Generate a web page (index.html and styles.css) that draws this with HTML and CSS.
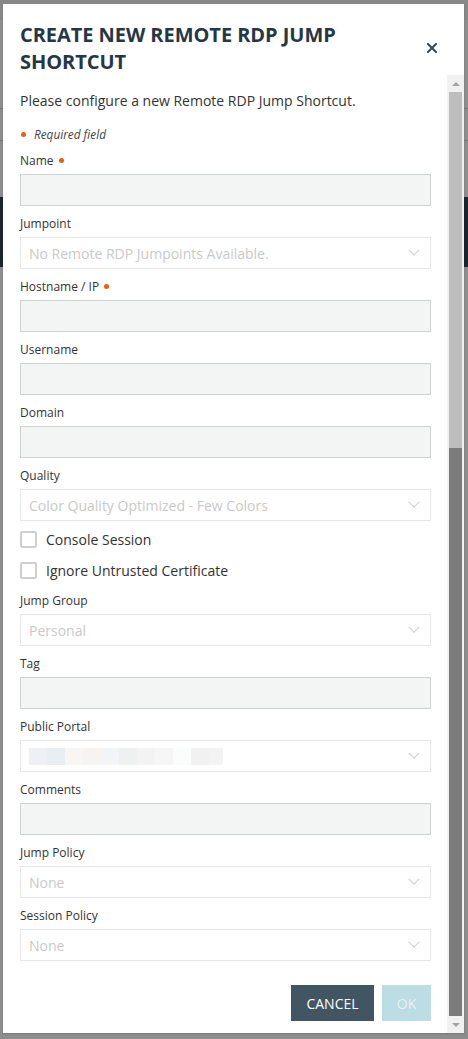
FILE: index.html
```html
<!DOCTYPE html>
<html lang="en">
<head>
<meta charset="utf-8">
<title>Create New Remote RDP Jump Shortcut</title>
<link rel="stylesheet" href="styles.css">
</head>
<body>
<div class="modal">
  <div class="modal-header">
    <h1 class="title">CREATE NEW REMOTE RDP JUMP SHORTCUT</h1>
    <button class="close" aria-label="Close">
      <svg width="10" height="10" viewBox="0 0 10 10"><path d="M1 1 L9 9 M9 1 L1 9" stroke="#3a4550" stroke-width="2" stroke-linecap="square"/></svg>
    </button>
  </div>
  <div class="modal-main">
    <div class="content">
      <p class="intro">Please configure a new Remote RDP Jump Shortcut.</p>
      <p class="required"><span class="dot"></span><em>Required field</em></p>

      <div class="field">
        <label class="label">Name <span class="dot"></span></label>
        <div class="input"></div>
      </div>
      <div class="field">
        <label class="label">Jumpoint</label>
        <div class="select"><span class="placeholder">No Remote RDP Jumpoints Available.</span><span class="chev"></span></div>
      </div>
      <div class="field">
        <label class="label">Hostname / IP <span class="dot"></span></label>
        <div class="input"></div>
      </div>
      <div class="field">
        <label class="label">Username</label>
        <div class="input"></div>
      </div>
      <div class="field">
        <label class="label">Domain</label>
        <div class="input"></div>
      </div>
      <div class="field">
        <label class="label">Quality</label>
        <div class="select"><span class="placeholder">Color Quality Optimized - Few Colors</span><span class="chev"></span></div>
      </div>

      <div class="check"><span class="box"></span><span>Console Session</span></div>
      <div class="check last"><span class="box"></span><span>Ignore Untrusted Certificate</span></div>

      <div class="field">
        <label class="label">Jump Group</label>
        <div class="select"><span class="placeholder">Personal</span><span class="chev"></span></div>
      </div>
      <div class="field">
        <label class="label">Tag</label>
        <div class="input"></div>
      </div>
      <div class="field">
        <label class="label">Public Portal</label>
        <div class="select">
          <span class="blur">
            <i class="b1"></i><i class="b2"></i><i class="b3"></i><i class="b4"></i><i class="b5"></i><i class="b6"></i><i class="b7"></i><i class="b8"></i><i class="b9"></i><i class="b10"></i><i class="b11"></i>
          </span>
          <span class="chev"></span>
        </div>
      </div>
      <div class="field">
        <label class="label">Comments</label>
        <div class="input"></div>
      </div>
      <div class="field">
        <label class="label">Jump Policy</label>
        <div class="select"><span class="placeholder">None</span><span class="chev"></span></div>
      </div>
      <div class="field">
        <label class="label">Session Policy</label>
        <div class="select"><span class="placeholder">None</span><span class="chev"></span></div>
      </div>

      <div class="actions">
        <button class="btn cancel">CANCEL</button>
        <button class="btn ok">OK</button>
      </div>
    </div>
    <div class="scrollbar">
      <div class="arrow up"></div>
      <div class="thumb"></div>
      <div class="track-dark"></div>
      <div class="arrow down"></div>
    </div>
  </div>
</div>
</body>
</html>
```

FILE: styles.css
```css
* { box-sizing: border-box; }

html, body { height: 100%; }

body {
  margin: 0;
  padding: 4px 4px 0 3px;
  font-family: "Open Sans", "Noto Sans", sans-serif;
  color: #2e2e2e;
  background: linear-gradient(to bottom,
    #888888 0, #888888 20px,
    #8e8e8e 20px, #8e8e8e 108px,
    #767676 108px, #767676 109px,
    #8e8e8e 109px, #8e8e8e 140px,
    #767676 140px, #767676 141px,
    #8e8e8e 141px, #8e8e8e 197px,
    #1c252e 197px, #1c252e 267px,
    #8e8e8e 267px, #8e8e8e 100%);
}

.modal {
  width: 461px;
  height: 1029px;
  background: #ffffff;
  display: flex;
  flex-direction: column;
  box-shadow: 0 1px 2px rgba(0,0,0,0.15);
}

.modal-header {
  display: flex;
  align-items: flex-start;
  justify-content: space-between;
  padding: 17px 0 0 17px;
  height: 71px;
}

.title {
  margin: 0;
  font-size: 20px;
  line-height: 27px;
  font-weight: 700;
  color: #253746;
  width: 360px;
  letter-spacing: -0.05px;
}

.close {
  border: 0;
  background: none;
  padding: 0;
  margin: 22px 27px 0 0;
  width: 10px;
  height: 10px;
  display: flex;
}

.modal-main {
  flex: 1;
  display: flex;
  min-height: 0;
}

.content {
  flex: 1;
  padding: 16px 16px 0 17px;
}

.intro {
  margin: 0;
  font-size: 14px;
  line-height: 20px;
  color: #333;
}

.required {
  margin: 15px 0 10px;
  display: flex;
  align-items: center;
  gap: 8px;
  font-size: 11.8px;
  line-height: 16px;
  color: #444;
  padding-left: 1px;
}

.dot {
  display: inline-block;
  width: 5px;
  height: 5px;
  border-radius: 50%;
  background: #f35b0a;
  vertical-align: 2px;
  margin-left: 2px;
}

.required .dot { margin-left: 0; }

.field {
  margin-bottom: 9px;
}

.label {
  display: block;
  font-size: 12px;
  line-height: 18px;
  color: #333;
  margin-bottom: 4px;
}

.input {
  height: 32px;
  width: 411px;
  border: 1px solid #cfd2d2;
  background: #f3f4f4;
}

.select {
  height: 32px;
  width: 411px;
  border: 1px solid #e6e6e6;
  background: #fff;
  display: flex;
  align-items: center;
  justify-content: space-between;
  padding: 0 12px 0 8px;
}

.placeholder {
  font-size: 14px;
  color: #c9c9c9;
}

.chev {
  width: 8px;
  height: 8px;
  border-right: 1px solid #cfcfcf;
  border-bottom: 1px solid #cfcfcf;
  transform: rotate(45deg) translate(-2px, -2px);
}

.blur {
  display: flex;
  height: 17px;
}

.blur i {
  display: block;
  height: 17px;
  width: 18px;
}
.blur .b1 { background: #eef1f4; }
.blur .b2 { background: #e9eef2; }
.blur .b3 { background: #f7f6f5; }
.blur .b4 { background: #f6f3f1; }
.blur .b5 { background: #f3f4f5; }
.blur .b6 { background: #eff0f0; }
.blur .b7 { background: #f3f3f3; }
.blur .b8 { background: #f6f6f6; }
.blur .b9 { background: #fbfcfc; }
.blur .b10 { background: #f1f1f1; }
.blur .b11 { background: #f3f3f3; width: 14px; }

.check {
  display: flex;
  align-items: center;
  gap: 9px;
  height: 19px;
  margin-bottom: 12px;
  font-size: 14px;
  color: #333;
}

.box {
  width: 17px;
  height: 17px;
  border: 2px solid #cfcfcf;
  border-radius: 2px;
  background: #fff;
}

.actions {
  display: flex;
  justify-content: flex-end;
  gap: 8px;
  margin-top: 24px;
}

.btn {
  height: 36px;
  border: 0;
  font-family: inherit;
  font-size: 14px;
  color: #fff;
  padding: 0;
}

.cancel {
  width: 83px;
  background: #415563;
}

.ok {
  width: 49px;
  background: #bcdde4;
  color: #e6f2f5;
}

.scrollbar {
  width: 17px;
  background: #f1f1f1;
  display: flex;
  flex-direction: column;
  align-items: center;
}

.arrow {
  width: 17px;
  height: 17px;
  display: flex;
  align-items: center;
  justify-content: center;
}

.arrow::before {
  content: "";
  width: 0;
  height: 0;
  border-left: 4px solid transparent;
  border-right: 4px solid transparent;
}

.arrow.up::before { border-bottom: 4px solid #a3a3a3; }
.arrow.down::before { border-top: 4px solid #a3a3a3; }

.thumb {
  width: 13px;
  height: 356px;
  background: #bdbdbd;
}

.track-dark {
  width: 13px;
  flex: 1;
  background: #7b7b7b;
}
```
